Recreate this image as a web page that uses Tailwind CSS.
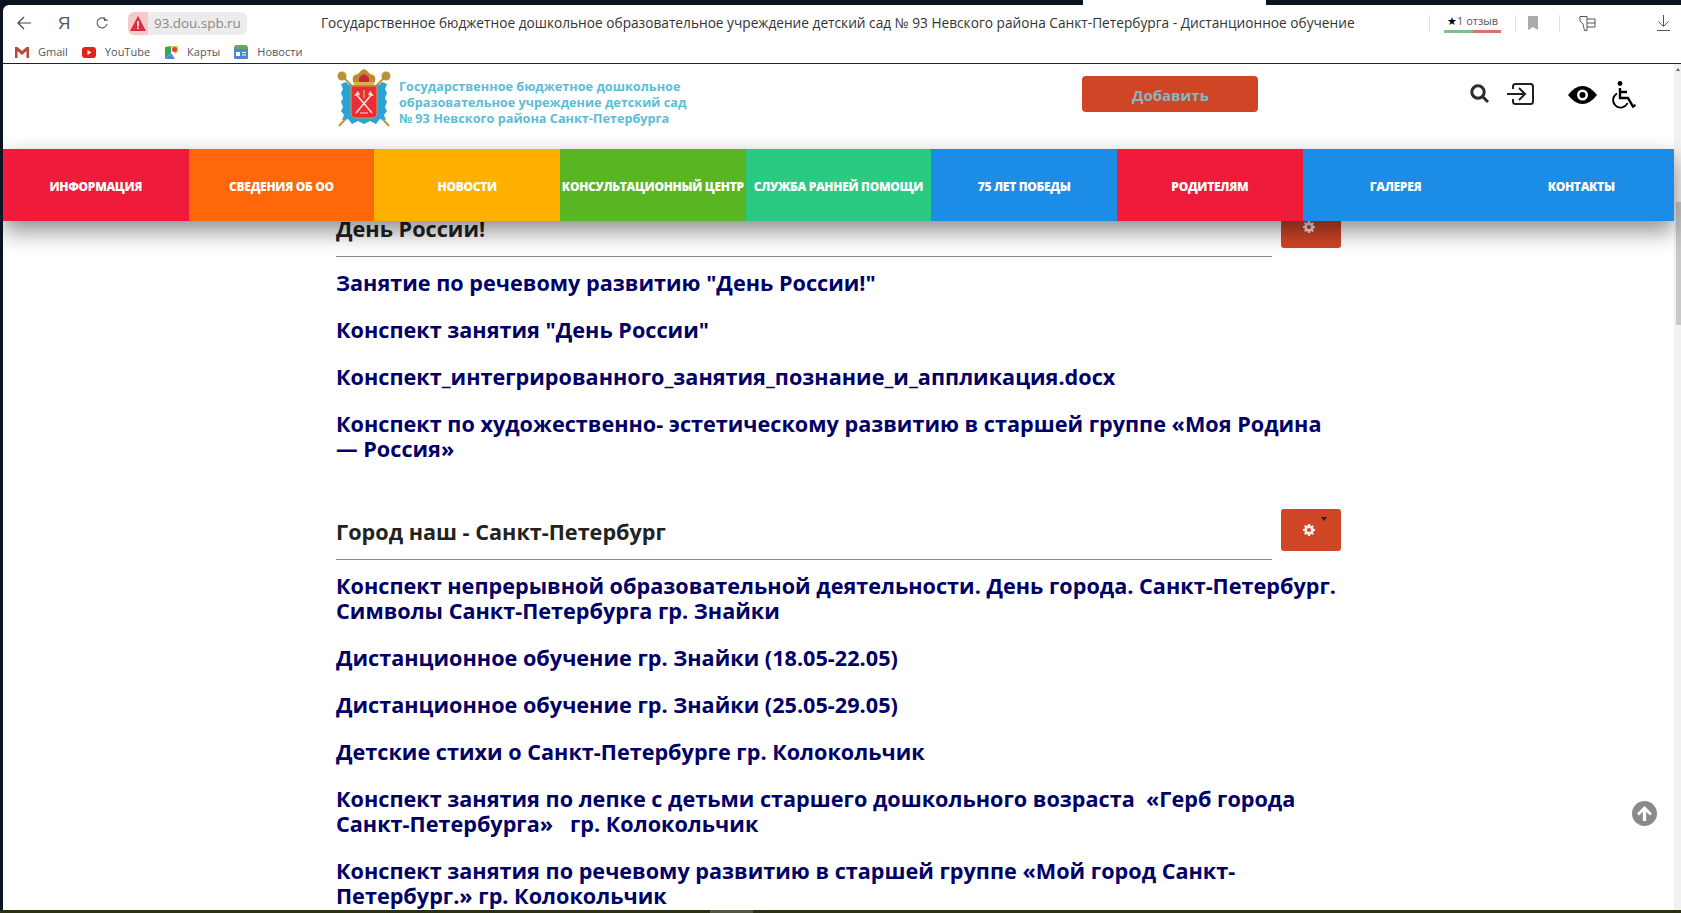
<!DOCTYPE html>
<html lang="ru">
<head>
<meta charset="utf-8">
<title>Дистанционное обучение</title>
<script src="https://cdn.jsdelivr.net/npm/@tailwindcss/browser@4"></script>
</head>
<body class="m-0">
<div class="relative w-[1681px] h-[913px] overflow-hidden bg-[#0a1420] pt-[5px] pl-[3px] pb-[3px] font-['Open_Sans',sans-serif]">
  <div class="absolute top-0 left-[1083px] w-[183px] h-[5px] bg-white"></div>
  <div class="absolute bottom-0 left-0 w-full h-[3px] bg-[#2a3010]"><div class="ml-[710px] w-[43px] h-full bg-[#55563f]"></div></div>
  <div class="h-full bg-white rounded-tl-md flex flex-col overflow-hidden">
    <div class="h-[34px] pt-[2px] flex items-center shrink-0 text-[#333] relative">
      <svg class="ml-[13px] w-[16px] h-[16px]" viewBox="0 0 16 16" fill="none" stroke="#444" stroke-width="1.2"><path d="M15 8H2M8 2 2 8l6 6"/></svg>
      <span class="ml-[26px] w-[16px] text-[17px] leading-none text-[#555] font-['Liberation_Sans',sans-serif]">Я</span>
      <svg class="ml-[21px] w-[14px] h-[14px]" viewBox="0 0 14 14" fill="none" stroke="#555" stroke-width="1.1"><path d="M11.500 4.500A5 5 0 1 0 12 8M9 1l.5 3.500L13 4"/></svg>
      <div class="ml-[19px] w-[20px] h-[23px] rounded-l-md bg-[#f6c9cb] flex items-center justify-center">
        <svg class="w-[16px] h-[15px]" viewBox="0 0 16 15"><path d="M8 0 16 15H0Z" fill="#dc2f3c"/><path d="M7.200 5h1.600v5.500H7.200zM7.200 11.500h1.600V13H7.200z" fill="#fff"/></svg>
      </div>
      <div class="w-[99px] h-[23px] rounded-r-md bg-[#ececec] flex items-center pl-[6px] text-[13.400px] text-[#888] whitespace-nowrap">93.dou.spb.ru</div>
      <div class="ml-[74px] w-[1034px] text-[13.700px] leading-none text-[#333] whitespace-nowrap">Государственное бюджетное дошкольное образовательное учреждение детский сад № 93 Невского района Санкт-Петербурга - Дистанционное обучение</div>
      <div class="ml-[74px] w-px h-[17px] bg-[#e0e0e0]"></div>
      <div class="ml-[14px] w-[57px] flex flex-col items-center">
        <span class="text-[11px] leading-[14px] text-[#555] whitespace-nowrap"><span class="text-black">★</span>1 отзыв</span>
        <div class="flex w-full h-[3px] mt-[2px]"><div class="w-1/2 bg-[#7fc08f]"></div><div class="w-1/2 bg-[#de6f6b]"></div></div>
      </div>
      <div class="ml-[14px] w-px h-[17px] bg-[#e0e0e0]"></div>
      <svg class="ml-[12px] w-[10px] h-[14px]" viewBox="0 0 10 14"><path d="M0 0h10v14L5 11 0 14Z" fill="#aaa"/></svg>
      <div class="ml-[21px] w-px h-[17px] bg-[#e0e0e0]"></div>
      <svg class="ml-[19px] w-[17px] h-[17px]" viewBox="0 0 17 17" fill="none" stroke="#555" stroke-width="1"><path d="M1 1.500h7v14H5.500L4 9 1 6ZM8 4h8v8H8M8 8h8"/></svg>
      <svg class="ml-[61px] w-[13px] h-[16px]" viewBox="0 0 13 16" fill="none" stroke="#555" stroke-width="1"><path d="M6.500 0v11M1.500 6.500l5 5 5-5M0 15.500h13"/></svg>
    </div>
    <div class="h-[24px] pt-[2px] flex items-center shrink-0 text-[11px] text-[#555]">
      <svg class="ml-[12px] w-[14px] h-[11px]" viewBox="0 0 14 11"><path d="M0 0h2.500L7 4l4.500-4H14v11h-2.500V4L7 8 2.500 4v7H0Z" fill="#b34a3c"/></svg>
      <span class="ml-[9px]">Gmail</span>
      <svg class="ml-[14px] w-[14px] h-[11px]" viewBox="0 0 14 11"><rect width="14" height="11" rx="3" fill="#e2231a"/><path d="M5.500 3v5l4-2.500Z" fill="#fff"/></svg>
      <span class="ml-[9px]">YouTube</span>
      <svg class="ml-[15px] w-[13px] h-[13px]" viewBox="0 0 13 13"><path d="M0 1 6 0v7L0 13Z" fill="#3aa757"/><path d="M6 7l4 6H0Z" fill="#4a86e8"/><path d="M6 0h7v6l-3 2Z" fill="#f0c33c"/><circle cx="9.500" cy="3.500" r="2.500" fill="#d9473c"/></svg>
      <span class="ml-[9px]">Карты</span>
      <svg class="ml-[14px] w-[14px] h-[14px]" viewBox="0 0 14 14"><rect y="1" width="14" height="13" rx="1.500" fill="#4a86d8"/><rect x="1" width="12" height="4" rx="1" fill="#6aa84f"/><rect x="2" y="7" width="4" height="4" fill="#fff"/><path d="M8 7h4v1H8zM8 9.500h4v1H8z" fill="#fff"/></svg>
      <span class="ml-[9px]">Новости</span>
    </div>
    <div class="h-px bg-[#222] shrink-0"></div>

    <div class="flex-1 flex min-h-0">
      <div class="flex-1 flex flex-col min-w-0">
        <header class="h-[85px] shrink-0 flex items-start bg-white pl-[333px]">
          <svg class="mt-[5px] w-[56px] h-[60px] shrink-0" viewBox="0 0 56 60">
            <path d="M6 7 17 18M50 7 39 18M15 44 3 57M41 44 53 57" stroke="#b89a3a" stroke-width="2"/>
            <circle cx="6" cy="7" r="4.500" fill="#b8923a"/><circle cx="50" cy="7" r="4.500" fill="#b8923a"/>
            <path d="M5 15 10 13 13 16 43 16 46 13 51 15 49 20 51 24 49 29 51 33 49 38 51 42 48 46 50 51 44 50 40 55 34 52 28 55 22 52 16 55 12 50 6 51 8 46 5 42 7 38 5 33 7 29 5 24 7 20Z" fill="#2aa3d6"/>
            <path d="M18 15Q14 6 22 5 25 1 28 0 31 1 34 5 42 6 38 15Z" fill="#c08a2c"/>
            <path d="M23 13Q22 7 28 5 34 7 33 13Z" fill="#c5283a"/>
            <rect x="18" y="13" width="20" height="3" fill="#d9b44a"/>
            <path d="M15 17H41V44Q41 49 36 49H20Q15 49 15 44Z" fill="#ea2c38" stroke="#c8a23c" stroke-width="1"/>
            <path d="M20 25 36 44M36 25 20 44" stroke="#f3e2c8" stroke-width="1.600"/>
            <path d="M18 27 22 22 24 26ZM38 27 34 22 32 26Z" fill="#f3e2c8"/>
            <path d="M28 21v8" stroke="#d9b44a" stroke-width="1.400"/>
            <path d="M24 44h8" stroke="#f3e2c8" stroke-width="1"/>
          </svg>
          <div class="ml-[7px] mt-[14px] text-[12.700px] leading-[16px] font-bold text-[#5cbdd8] whitespace-nowrap">Государственное бюджетное дошкольное<br>образовательное учреждение детский сад<br>№ 93 Невского района Санкт-Петербурга</div>
          <button class="ml-[396px] mt-[12px] pt-[3px] w-[176px] h-[36px] rounded bg-[#d04526] text-[#85b6c6] text-[15px] font-bold shrink-0">Добавить</button>
          <svg class="ml-[212px] mt-[20px] w-[19px] h-[19px] shrink-0" viewBox="0 0 19 19" fill="none" stroke="#2b2b2b" stroke-width="3"><circle cx="8" cy="8" r="6.200"/><path d="m12.500 12.500 5.500 5.500"/></svg>
          <svg class="ml-[18px] mt-[19px] w-[27px] h-[22px] shrink-0" viewBox="0 0 27 22" fill="none" stroke="#222" stroke-width="2"><path d="M6 6V3.500Q6 1 8.500 1h15Q26 1 26 3.500v15q0 2.500-2.500 2.500h-15Q6 21 6 18.500V16M0 11h18M12 5l6 6-6 6"/></svg>
          <svg class="ml-[34px] mt-[22px] w-[29px] h-[18px] shrink-0" viewBox="0 0 29 18"><path d="M0 9Q7 0 14.500 0T29 9Q22 18 14.500 18T0 9Z" fill="#000"/><circle cx="14.500" cy="9" r="5.500" fill="#fff"/><circle cx="14.500" cy="9" r="3" fill="#000"/></svg>
          <svg class="ml-[14px] mt-[17px] w-[25px] h-[29px] shrink-0" viewBox="0 0 25 29" fill="none" stroke="#000" stroke-width="2.400"><circle cx="9" cy="2.500" r="2.400" fill="#000" stroke="none"/><path d="M9 7v10h8l5 8.500 2.500-1.500M9 11h7"/><path d="M6 12.500a7.500 7.500 0 1 0 10.500 9.500" stroke-width="1.800"/></svg>
        </header>
        <nav class="relative z-10 h-[72px] pt-[3px] shrink-0 grid grid-cols-9 text-white text-[12px] font-extrabold uppercase tracking-[-0.3px] shadow-[0_10px_22px_rgba(0,0,0,0.45)] whitespace-nowrap text-center">
          <a class="-mt-[3px] pt-[3px] flex items-center justify-center bg-[#f01b3a]">Информация</a>
          <a class="-mt-[3px] pt-[3px] flex items-center justify-center bg-[#ff670a]">Сведения об ОО</a>
          <a class="-mt-[3px] pt-[3px] flex items-center justify-center bg-[#ffb001]">Новости</a>
          <a class="-mt-[3px] pt-[3px] flex items-center justify-center bg-[#5ab523]">Консультационный центр</a>
          <a class="-mt-[3px] pt-[3px] flex items-center justify-center bg-[#2aca83]">Служба ранней помощи</a>
          <a class="-mt-[3px] pt-[3px] flex items-center justify-center bg-[#1b8de6]">75 лет Победы</a>
          <a class="-mt-[3px] pt-[3px] flex items-center justify-center bg-[#f01b3a]">Родителям</a>
          <a class="-mt-[3px] pt-[3px] flex items-center justify-center bg-[#1b8de6]">Галерея</a>
          <a class="-mt-[3px] pt-[3px] flex items-center justify-center bg-[#1b8de6]">Контакты</a>
        </nav>
        <main class="relative flex-1 min-h-0 overflow-hidden">
          <div class="-mt-[15px] ml-[333px] w-[1005px] text-[21.650px] leading-[25px] font-bold text-[#000066]">
            <section>
              <div class="flex items-start">
                <h2 class="flex-1 pt-[10px] pb-[15px] border-b border-[#888] text-[#222]">День России!</h2>
                <div class="ml-[9px] w-[60px] h-[42px] rounded-[3px] bg-[#d04526] flex items-center justify-center">
                  <svg class="w-[12px] h-[12px] -ml-[5px]" viewBox="0 0 12 12" fill="#f4eeee"><path d="M5 0h2l.3 1.600 1.100.5L9.800 1.200l1.100 1.100-.9 1.400.5 1.100L12 5v2l-1.500.3-.5 1.100.9 1.400-1.100 1.100-1.400-.9-1.100.5L7 12H5l-.3-1.500-1.100-.5-1.400.9-1.100-1.100.9-1.400-.5-1.100L0 7V5l1.500-.3.500-1.100-.9-1.400 1.100-1.100 1.400.9 1.100-.5ZM6 4a2 2 0 1 0 0 4 2 2 0 0 0 0-4Z" fill-rule="evenodd"/></svg>
                </div>
              </div>
              <div class="mt-[13px] flex flex-col gap-[22px]">
                <a>Занятие по речевому развитию "День России!"</a>
                <a>Конспект занятия "День России"</a>
                <a>Конспект_интегрированного_занятия_познание_и_аппликация.docx</a>
                <a>Конспект по художественно- эстетическому развитию в старшей группе «Моя Родина — Россия»</a>
              </div>
            </section>
            <section class="mt-[48px]">
              <div class="flex items-start">
                <h2 class="flex-1 pt-[10px] pb-[15px] border-b border-[#888] text-[#222]">Город наш - Санкт-Петербург</h2>
                <div class="relative ml-[9px] w-[60px] h-[42px] rounded-[3px] bg-[#d04526] flex items-center justify-center">
                  <svg class="w-[12px] h-[12px] -ml-[5px]" viewBox="0 0 12 12" fill="#f4eeee"><path d="M5 0h2l.3 1.600 1.100.5L9.800 1.200l1.100 1.100-.9 1.400.5 1.100L12 5v2l-1.500.3-.5 1.100.9 1.400-1.100 1.100-1.400-.9-1.100.5L7 12H5l-.3-1.500-1.100-.5-1.400.9-1.100-1.100.9-1.400-.5-1.100L0 7V5l1.500-.3.500-1.100-.9-1.400 1.100-1.100 1.400.9 1.100-.5ZM6 4a2 2 0 1 0 0 4 2 2 0 0 0 0-4Z" fill-rule="evenodd"/></svg>
                  <span class="absolute top-[8px] left-[40px] w-0 h-0 border-x-[3.500px] border-x-transparent border-t-[4px] border-t-[#222]"></span>
                </div>
              </div>
              <div class="mt-[13px] flex flex-col gap-[22px]">
                <a>Конспект непрерывной образовательной деятельности. День города. Санкт-Петербург. Символы Санкт-Петербурга гр. Знайки</a>
                <a>Дистанционное обучение гр. Знайки (18.05-22.05)</a>
                <a>Дистанционное обучение гр. Знайки (25.05-29.05)</a>
                <a>Детские стихи о Санкт-Петербурге гр. Колокольчик</a>
                <a>Конспект занятия по лепке с детьми старшего дошкольного возраста&nbsp; «Герб города Санкт-Петербурга»&nbsp;&nbsp; гр. Колокольчик</a>
                <a>Конспект занятия по речевому развитию в старшей группе «Мой город Санкт-Петербург.» гр. Колокольчик</a>
              </div>
            </section>
          </div>
          <svg class="absolute right-[17px] top-[580px] w-[25px] h-[25px]" viewBox="0 0 25 25"><circle cx="12.500" cy="12.500" r="12.500" fill="#8a8a8a"/><path d="M12.500 5 20 12.500l-2 2-3.800-3.800V20h-3.400v-9.300L7 14.500l-2-2Z" fill="#fff"/></svg>
        </main>
      </div>
      <div class="w-[7px] shrink-0 bg-[#f1f1f1] relative">
        <span class="absolute top-[4px] left-[2px] w-0 h-0 border-x-[2.500px] border-x-transparent border-b-[3px] border-b-[#666]"></span>
        <div class="absolute top-[138px] left-[2px] right-0 h-[123px] bg-[#c8c8c8]"></div>
      </div>
    </div>
  </div>
</div>
</body>
</html>
